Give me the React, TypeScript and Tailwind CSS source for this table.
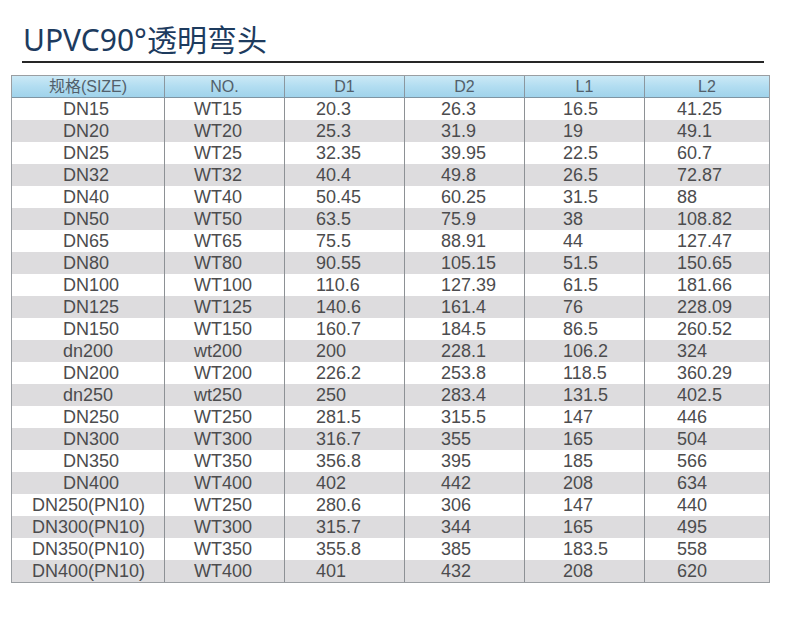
const rows: string[][] = [
  ['DN15', 'WT15', '20.3', '26.3', '16.5', '41.25'],
  ['DN20', 'WT20', '25.3', '31.9', '19', '49.1'],
  ['DN25', 'WT25', '32.35', '39.95', '22.5', '60.7'],
  ['DN32', 'WT32', '40.4', '49.8', '26.5', '72.87'],
  ['DN40', 'WT40', '50.45', '60.25', '31.5', '88'],
  ['DN50', 'WT50', '63.5', '75.9', '38', '108.82'],
  ['DN65', 'WT65', '75.5', '88.91', '44', '127.47'],
  ['DN80', 'WT80', '90.55', '105.15', '51.5', '150.65'],
  ['DN100', 'WT100', '110.6', '127.39', '61.5', '181.66'],
  ['DN125', 'WT125', '140.6', '161.4', '76', '228.09'],
  ['DN150', 'WT150', '160.7', '184.5', '86.5', '260.52'],
  ['dn200', 'wt200', '200', '228.1', '106.2', '324'],
  ['DN200', 'WT200', '226.2', '253.8', '118.5', '360.29'],
  ['dn250', 'wt250', '250', '283.4', '131.5', '402.5'],
  ['DN250', 'WT250', '281.5', '315.5', '147', '446'],
  ['DN300', 'WT300', '316.7', '355', '165', '504'],
  ['DN350', 'WT350', '356.8', '395', '185', '566'],
  ['DN400', 'WT400', '402', '442', '208', '634'],
  ['DN250(PN10)', 'WT250', '280.6', '306', '147', '440'],
  ['DN300(PN10)', 'WT300', '315.7', '344', '165', '495'],
  ['DN350(PN10)', 'WT350', '355.8', '385', '183.5', '558'],
  ['DN400(PN10)', 'WT400', '401', '432', '208', '620'],
];

const headers = ['规格(SIZE)', 'NO.', 'D1', 'D2', 'L1', 'L2'];

// column widths and left text offsets read off the picture
const cols = ['w-[152px]', 'w-[120px]', 'w-[120px]', 'w-[120px]', 'w-[120px]', 'w-[125px]'];
const pads = ['pl-[51px]', 'pl-[29px]', 'pl-[31px]', 'pl-[36px]', 'pl-[38px]', 'pl-[32px]'];

export default function App() {
  return (
    <div className="w-[790px] h-[643px] bg-white overflow-hidden">
      <h1 className="pt-[22px] pl-[23px] text-[30px] leading-[36px] text-[#1d3b5e] font-['Noto_Sans','Noto_Sans_CJK_SC',sans-serif]">
        UPVC90°透明弯头
      </h1>
      <div className="mt-[3px] ml-[22px] w-[742px] h-[2px] bg-[#262626]" />

      <div className="mt-[12px] ml-[11px] w-[759px] border border-[#9a9ea2] font-['Liberation_Sans','Noto_Sans_CJK_SC',sans-serif]">
        <div className="flex h-[22px] bg-gradient-to-b from-[#cbe9f6] via-[#b2ddf1] to-[#a0d3eb] border-b border-[#7f95a3]">
          {headers.map((h, i) => (
            <div
              key={h}
              className={`${cols[i]} ${i > 0 ? 'border-l border-[#8a979f]' : ''} text-center text-[16px] leading-[22px] text-[#52606b]`}
            >
              {h}
            </div>
          ))}
        </div>
        {rows.map((r, ri) => (
          <div key={ri} className={`flex h-[22px] ${ri % 2 === 1 ? 'bg-[#dddcde]' : 'bg-white'}`}>
            {r.map((c, ci) => (
              <div
                key={ci}
                className={`${cols[ci]} ${ci > 0 ? 'border-l border-[#8d9195]' : ''} ${
                  ci === 0 && c.includes('(') ? 'pl-[20px]' : pads[ci]
                } text-[18px] leading-[23px] text-[#4c4c4e] whitespace-nowrap`}
              >
                {c}
              </div>
            ))}
          </div>
        ))}
      </div>
    </div>
  );
}
